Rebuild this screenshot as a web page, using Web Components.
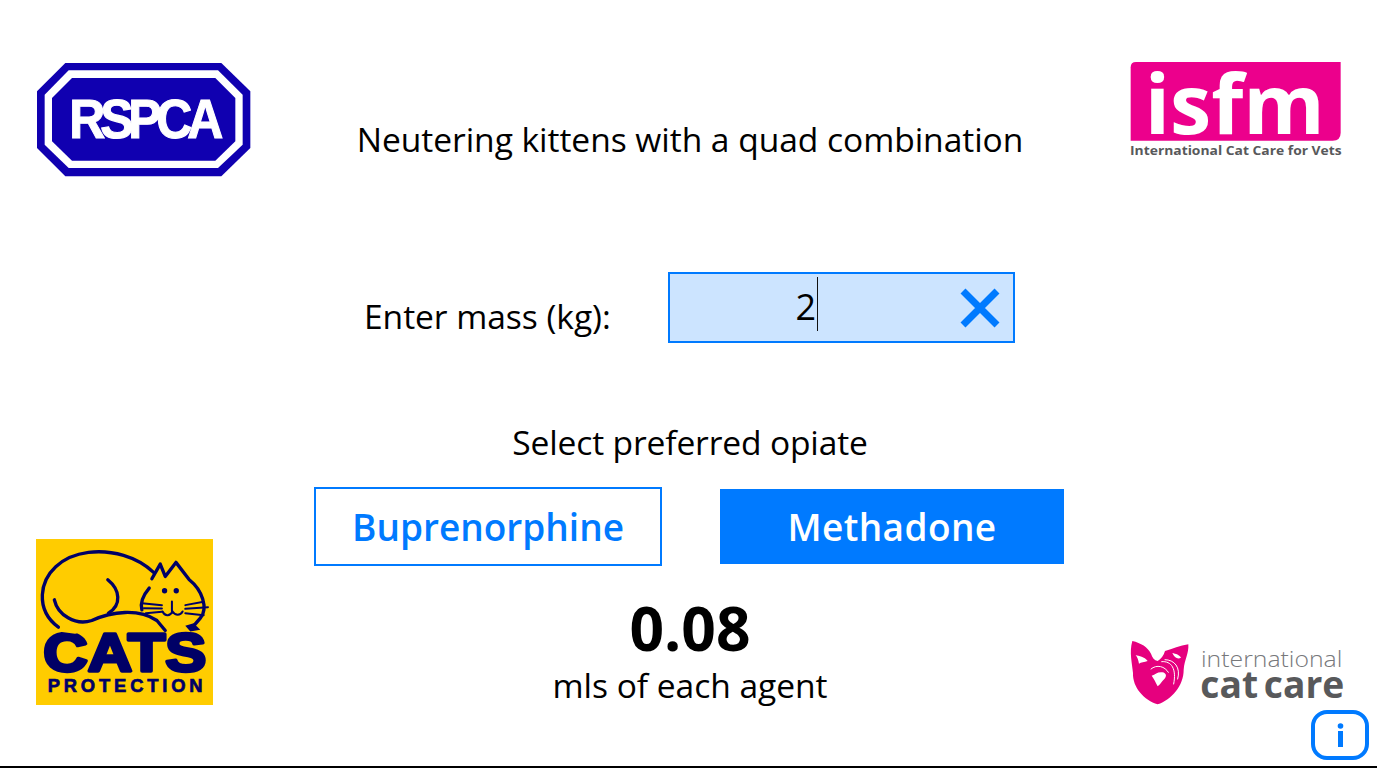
<!DOCTYPE html>
<html>
<head>
<meta charset="utf-8">
<title>Neutering kittens</title>
<style>
    html, body { margin: 0; padding: 0; background: white; }
    body { font-family: "Open Sans", "Noto Sans", sans-serif; color: #000; }
</style>
</head>
<body>
<calc-page>
    <rspca-logo slot="top-left"></rspca-logo>
    <isfm-logo slot="top-right"></isfm-logo>
    <cats-logo slot="bottom-left"></cats-logo>
    <icc-logo slot="bottom-right"></icc-logo>
    <info-button slot="bottom-right"></info-button>

    <calc-title>Neutering kittens with a quad combination</calc-title>
    <mass-field label="Enter mass (kg):" value="2"></mass-field>
    <calc-prompt>Select preferred opiate</calc-prompt>
    <opiate-picker>
        <opiate-button>Buprenorphine</opiate-button>
        <opiate-button selected>Methadone</opiate-button>
    </opiate-picker>
    <dose-result value="0.08">mls of each agent</dose-result>
</calc-page>

<script>
const BLUE = "#007aff";

class CalcPage extends HTMLElement {
    constructor() {
        super();
        this.attachShadow({ mode: 'open' });
        this.shadowRoot.innerHTML = `
        <style>
            :host {
                display: grid;
                grid-template-columns: 300px 780px 297px;
                height: 766px;
                border-bottom: 2px solid #000;
                background: white;
                overflow: hidden;
            }
            .side {
                display: flex;
                flex-direction: column;
                justify-content: space-between;
            }
            .left { padding: 63px 0 61px 36px; }
            .right { padding: 62px 8px 6px 0; align-items: flex-end; }
            .stack { display: flex; flex-direction: column; align-items: flex-end; }
            .centre {
                display: flex;
                flex-direction: column;
                align-items: center;
            }
        </style>
        <div class="side left">
            <slot name="top-left"></slot>
            <slot name="bottom-left"></slot>
        </div>
        <div class="centre"><slot></slot></div>
        <div class="side right">
            <slot name="top-right"></slot>
            <div class="stack"><slot name="bottom-right"></slot></div>
        </div>`;
    }
}

class CalcTitle extends HTMLElement {
    constructor() {
        super();
        this.attachShadow({ mode: 'open' });
        this.shadowRoot.innerHTML = `
        <style>
            :host { display: block; margin-top: 115px; font-size: 33.6px; line-height: 48px; letter-spacing: -0.05px; white-space: nowrap; }
        </style>
        <slot></slot>`;
    }
}

class CalcPrompt extends HTMLElement {
    constructor() {
        super();
        this.attachShadow({ mode: 'open' });
        this.shadowRoot.innerHTML = `
        <style>
            :host { display: block; margin-top: 75px; font-size: 33.6px; line-height: 48px; letter-spacing: -0.15px; white-space: nowrap; }
        </style>
        <slot></slot>`;
    }
}

class MassField extends HTMLElement {
    constructor() {
        super();
        this.attachShadow({ mode: 'open' });
        this.shadowRoot.innerHTML = `
        <style>
            :host { display: flex; align-items: flex-start; margin-top: 109px; font-size: 33.6px; letter-spacing: -0.05px; }
            .label { width: 304px; margin: 20px 0 0 -1px; line-height: 48px; white-space: nowrap; }
            .box {
                box-sizing: border-box;
                width: 347px;
                height: 71px;
                display: flex;
                align-items: center;
                border: 2px solid ${BLUE};
                background: #cce4ff;
            }
            .value { width: 146px; text-align: right; line-height: 48px; margin-top: -2px; font-size: 36px; }
            .caret { width: 1px; height: 54px; margin: 0 0 7px 1px; background: #111; }
            svg { width: 44px; height: 44px; margin-left: 140px; }
        </style>
        <div class="label"></div>
        <div class="box">
            <div class="value"></div>
            <div class="caret"></div>
            <svg viewBox="0 0 44 44"><path d="M5 5 39 39M39 5 5 39" fill="none" stroke="${BLUE}" stroke-width="7"/></svg>
        </div>`;
    }
    connectedCallback() {
        this.shadowRoot.querySelector('.label').textContent = this.getAttribute('label');
        this.shadowRoot.querySelector('.value').textContent = this.getAttribute('value');
    }
}

class OpiatePicker extends HTMLElement {
    constructor() {
        super();
        this.attachShadow({ mode: 'open' });
        this.shadowRoot.innerHTML = `
        <style>
            :host { display: flex; align-items: center; gap: 58px; margin-top: 21px; margin-left: -2px; }
        </style>
        <slot></slot>`;
    }
}

class OpiateButton extends HTMLElement {
    constructor() {
        super();
        this.attachShadow({ mode: 'open' });
        this.shadowRoot.innerHTML = `
        <style>
            :host {
                box-sizing: border-box;
                display: flex;
                align-items: center;
                justify-content: center;
                width: 348px;
                height: 79px;
                border: 2px solid ${BLUE};
                color: ${BLUE};
                font-size: 37px;
                font-weight: 600;
                white-space: nowrap;
            }
            :host([selected]) {
                width: 344px;
                height: 75px;
                background: ${BLUE};
                color: white;
                letter-spacing: 0.4px;
            }
        </style>
        <slot></slot>`;
    }
}

class DoseResult extends HTMLElement {
    constructor() {
        super();
        this.attachShadow({ mode: 'open' });
        this.shadowRoot.innerHTML = `
        <style>
            :host { display: flex; flex-direction: column; align-items: center; margin-top: 29px; }
            .value { font-size: 60.5px; font-weight: 700; line-height: 66px; }
            .unit { font-size: 33.6px; letter-spacing: -0.05px; line-height: 48px; }
        </style>
        <div class="value"></div>
        <div class="unit"><slot></slot></div>`;
    }
    connectedCallback() {
        this.shadowRoot.querySelector('.value').textContent = this.getAttribute('value');
    }
}

class InfoButton extends HTMLElement {
    constructor() {
        super();
        this.attachShadow({ mode: 'open' });
        this.shadowRoot.innerHTML = `
        <style>
            :host { display: block; width: 58px; height: 50px; margin-top: 5px; }
            svg { display: block; width: 58px; height: 50px; }
        </style>
        <svg viewBox="0 0 58 50">
            <rect x="2" y="2" width="54" height="46" rx="14" fill="none" stroke="${BLUE}" stroke-width="4"/>
            <circle cx="29.5" cy="16" r="2.8" fill="${BLUE}"/>
            <rect x="27" y="21" width="5" height="16" fill="${BLUE}"/>
        </svg>`;
    }
}

class RspcaLogo extends HTMLElement {
    constructor() {
        super();
        this.attachShadow({ mode: 'open' });
        this.shadowRoot.innerHTML = `
        <style>
            :host { display: block; width: 214px; height: 114px; margin-left: 1px; }
            svg { display: block; width: 214px; height: 114px; overflow: visible; }
            text { font-family: "Liberation Sans", sans-serif; font-weight: 700; }
        </style>
        <svg viewBox="55 40 642 342">
            <path fill="#1000b0" d="M140 40H608L695 125V295L608 380H140L55 295V125Z"/>
            <path fill="#fff" d="M150 62H598L672 135V285L598 355H150L78 285V135Z"/>
            <path fill="#1000b0" d="M160 85H590L650 145V275L590 333H160L100 275V145Z"/>
            <text transform="translate(152 266) scale(1 1.12)" font-size="150" fill="#fff" stroke="#fff" stroke-width="3" textLength="462" lengthAdjust="spacing">RSPCA</text>
        </svg>`;
    }
}

class IsfmLogo extends HTMLElement {
    constructor() {
        super();
        this.attachShadow({ mode: 'open' });
        this.shadowRoot.innerHTML = `
        <style>
            :host { display: block; width: 212px; height: 96px; margin-right: 27px; }
            svg { display: block; width: 212px; height: 96px; overflow: visible; }
            text { font-family: "Open Sans", sans-serif; font-weight: 700; }
        </style>
        <svg viewBox="60 36 636 288">
            <path fill="#ec008c" d="M78 36H692V248Q692 272 668 272H62V52Q62 36 78 36Z"/>
            <text x="104" y="252" font-size="250" fill="#fff" textLength="540" lengthAdjust="spacingAndGlyphs">isfm</text>
            <text x="60" y="316" font-size="38" fill="#58595b" textLength="635" lengthAdjust="spacingAndGlyphs">International Cat Care for Vets</text>
        </svg>`;
    }
}

class CatsLogo extends HTMLElement {
    constructor() {
        super();
        this.attachShadow({ mode: 'open' });
        this.shadowRoot.innerHTML = `
        <style>
            :host { display: block; width: 177px; height: 166px; }
            svg { display: block; width: 177px; height: 166px; overflow: visible; }
            text { font-family: "Liberation Sans", sans-serif; font-weight: 700; fill: #000066; }
            .line { fill: none; stroke: #000066; stroke-width: 10; stroke-linecap: round; stroke-linejoin: round; }
            .thin { fill: none; stroke: #000066; stroke-width: 6; stroke-linecap: round; }
        </style>
        <svg viewBox="33 28 530 497">
            <rect x="33" y="28" width="530" height="497" fill="#ffcc00"/>
            <text x="55" y="423" font-size="162" textLength="488" lengthAdjust="spacingAndGlyphs" stroke="#000066" stroke-width="10" stroke-linejoin="round">CATS</text>
            <path d="M60 300C120 290 190 270 250 255 310 240 380 250 420 305 350 268 290 270 240 290L150 312Z" fill="#ffcc00"/>
            <path class="line" d="M385 128C335 80 260 60 190 68 110 78 55 130 52 195 50 240 70 270 100 292"/>
            <path class="line" d="M88 210C98 255 150 288 200 272 260 245 340 235 395 272L420 302"/>
            <path class="line" d="M248 150C285 180 290 225 250 250"/>
            <path class="line" d="M380 147 405 103 420 140 452 98 492 150C530 180 550 235 525 265L505 288"/>
            <path class="line" d="M372 175C355 195 345 220 350 240"/>
            <circle cx="418" cy="183" r="8" fill="#000066"/>
            <circle cx="453" cy="183" r="8" fill="#000066"/>
            <path class="thin" d="M440 215V245M412 245C420 262 435 258 442 245 450 258 465 258 472 245"/>
            <path class="thin" d="M350 220 410 226M356 235 410 236M362 250 410 246M480 226 535 216M480 237 548 232M480 250 535 256"/>
            <path d="M480 288 505 280 525 300 495 305Z" fill="#000066"/>
            <text x="68" y="487" font-size="55" textLength="464" lengthAdjust="spacing" stroke="#000066" stroke-width="2">PROTECTION</text>
        </svg>`;
    }
}

class IccLogo extends HTMLElement {
    constructor() {
        super();
        this.attachShadow({ mode: 'open' });
        this.shadowRoot.innerHTML = `
        <style>
            :host { display: block; width: 218px; height: 66px; margin-right: 22px; }
            svg { display: block; width: 218px; height: 66px; overflow: visible; }
            .a { font-family: "Open Sans", sans-serif; font-weight: 300; fill: #77787b; }
            .b { font-family: "Open Sans", sans-serif; font-weight: 700; fill: #58595b; }
            .w { fill: none; stroke: #fff; stroke-width: 3; stroke-linecap: round; }
        </style>
        <svg viewBox="42 30 654 198">
            <path fill="#e6007e" d="M52 36C78 42 98 54 108 74 112 86 118 94 128 96 138 90 146 80 150 66 172 60 195 50 220 46 222 74 208 92 206 122 206 170 170 212 128 226 88 214 52 175 54 132 52 104 42 70 52 36Z"/>
            <path fill="#fff" d="M62 78C72 82 88 82 98 96 88 100 78 100 72 104 70 94 68 86 62 78ZM172 72C182 74 194 78 198 86 188 92 178 86 172 72ZM110 140C122 136 128 128 142 130 154 132 156 142 148 150 140 158 134 168 128 172 122 160 116 148 110 140Z"/>
            <path class="w" d="M140 98C170 95 185 120 176 165M150 92C178 92 198 115 188 150M108 120C125 105 150 112 160 130"/>
            <text class="a" x="258" y="114" font-size="64" textLength="424" lengthAdjust="spacingAndGlyphs">international</text>
            <text class="b" x="256" y="207" font-size="112" textLength="432" lengthAdjust="spacingAndGlyphs" word-spacing="-12">cat care</text>
        </svg>`;
    }
}

customElements.define('calc-page', CalcPage);
customElements.define('calc-title', CalcTitle);
customElements.define('calc-prompt', CalcPrompt);
customElements.define('mass-field', MassField);
customElements.define('opiate-picker', OpiatePicker);
customElements.define('opiate-button', OpiateButton);
customElements.define('dose-result', DoseResult);
customElements.define('info-button', InfoButton);
customElements.define('rspca-logo', RspcaLogo);
customElements.define('isfm-logo', IsfmLogo);
customElements.define('cats-logo', CatsLogo);
customElements.define('icc-logo', IccLogo);
</script>
</body>
</html>
